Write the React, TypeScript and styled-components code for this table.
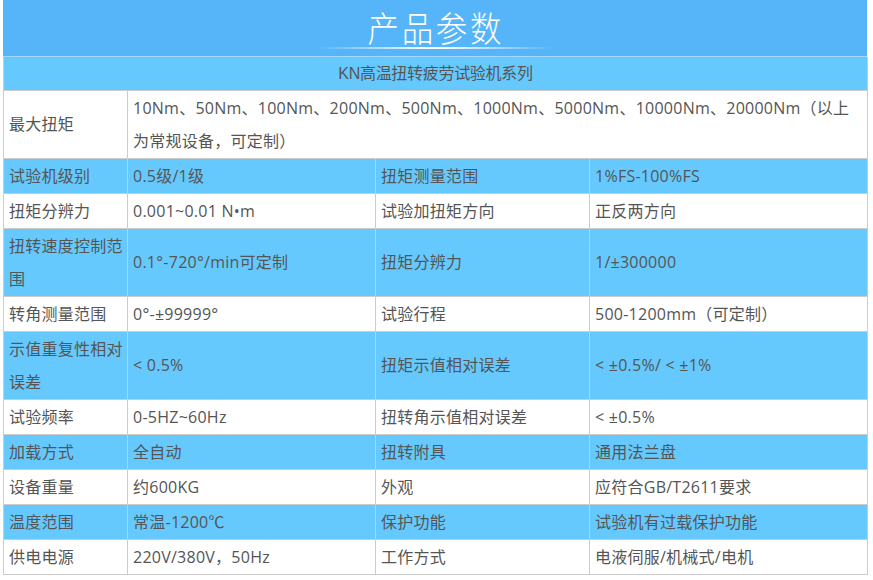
import React from "react";
import styled, { createGlobalStyle } from "styled-components";

const Global = createGlobalStyle`
  html, body { margin: 0; padding: 0; background: #ffffff; }
  body { font-family: "Open Sans", "Noto Sans CJK SC", sans-serif; }
`;

const Page = styled.div`
  width: 864px;
  margin-left: 3px;
`;

const Banner = styled.div`
  height: 56px;
  background: #56b5f8;
  border-bottom: 1px solid #a6d8fb;
  display: flex;
  flex-direction: column;
  align-items: center;
  justify-content: flex-start;
`;

const Title = styled.h1`
  margin: 4px 0 0;
  padding-left: 3px;
  font-family: "Noto Sans CJK SC", sans-serif;
  font-weight: 300;
  font-size: 35px;
  line-height: 46px;
  letter-spacing: 3px;
  color: #ffffff;
  transform: scaleX(0.9);
`;

const TitleLine = styled.div`
  width: 236px;
  height: 2px;
  margin-top: -3px;
  background: linear-gradient(
    90deg,
    rgba(255, 255, 255, 0) 0%,
    rgba(255, 255, 255, 0.95) 45%,
    rgba(255, 255, 255, 0.95) 55%,
    rgba(255, 255, 255, 0) 100%
  );
`;

const Table = styled.table`
  width: 864px;
  border-collapse: collapse;
  table-layout: fixed;
  font-size: 16px;
  letter-spacing: 0.25px;
  color: #555555;
`;

const Row = styled.tr<{ $blue?: boolean }>`
  background: ${(p) => (p.$blue ? "#66c9fd" : "#ffffff")};
`;

const Cell = styled.td<{ $center?: boolean }>`
  border: 1px solid #cccccc;
  padding: 0.5px 3px 0.5px 5px;
  line-height: 33px;
  vertical-align: middle;
  text-align: ${(p) => (p.$center ? "center" : "left")};
  word-break: break-all;
`;

const SubTitleCell = styled(Cell)`
  border-top: none;
  padding: 0 4px;
  line-height: 33px;
  font-family: "Liberation Sans", "Noto Sans CJK SC", sans-serif;
  letter-spacing: -0.3px;
`;

type Pair = [string, string];
type RowData = { blue: boolean; left: Pair; right: Pair };

const rows: RowData[] = [
  { blue: true, left: ["试验机级别", "0.5级/1级"], right: ["扭矩测量范围", "1%FS-100%FS"] },
  { blue: false, left: ["扭矩分辨力", "0.001~0.01 N•m"], right: ["试验加扭矩方向", "正反两方向"] },
  { blue: true, left: ["扭转速度控制范围", "0.1°-720°/min可定制"], right: ["扭矩分辨力", "1/±300000"] },
  { blue: false, left: ["转角测量范围", "0°-±99999°"], right: ["试验行程", "500-1200mm（可定制）"] },
  { blue: true, left: ["示值重复性相对误差", " < 0.5%"], right: ["扭矩示值相对误差", " < ±0.5%/ < ±1%"] },
  { blue: false, left: ["试验频率", "0-5HZ~60Hz"], right: ["扭转角示值相对误差", " < ±0.5%"] },
  { blue: true, left: ["加载方式", "全自动"], right: ["扭转附具", "通用法兰盘"] },
  { blue: false, left: ["设备重量", "约600KG"], right: ["外观", "应符合GB/T2611要求"] },
  { blue: true, left: ["温度范围", "常温-1200℃"], right: ["保护功能", "试验机有过载保护功能"] },
  { blue: false, left: ["供电电源", "220V/380V，50Hz"], right: ["工作方式", "电液伺服/机械式/电机"] },
];

export default function App() {
  return (
    <>
      <Global />
      <Page>
        <Banner>
          <Title>产品参数</Title>
          <TitleLine />
        </Banner>
        <Table>
          <colgroup>
            <col style={{ width: 124 }} />
            <col style={{ width: 248 }} />
            <col style={{ width: 214 }} />
            <col style={{ width: 278 }} />
          </colgroup>
          <tbody>
            <Row $blue>
              <SubTitleCell colSpan={4} $center>
                KN高温扭转疲劳试验机系列
              </SubTitleCell>
            </Row>
            <Row>
              <Cell>最大扭矩</Cell>
              <Cell colSpan={3}>
                10Nm、50Nm、100Nm、200Nm、500Nm、1000Nm、5000Nm、10000Nm、20000Nm（以上为常规设备，可定制）
              </Cell>
            </Row>
            {rows.map((r, i) => (
              <Row key={i} $blue={r.blue}>
                <Cell>{r.left[0]}</Cell>
                <Cell>{r.left[1]}</Cell>
                <Cell>{r.right[0]}</Cell>
                <Cell>{r.right[1]}</Cell>
              </Row>
            ))}
          </tbody>
        </Table>
      </Page>
    </>
  );
}
